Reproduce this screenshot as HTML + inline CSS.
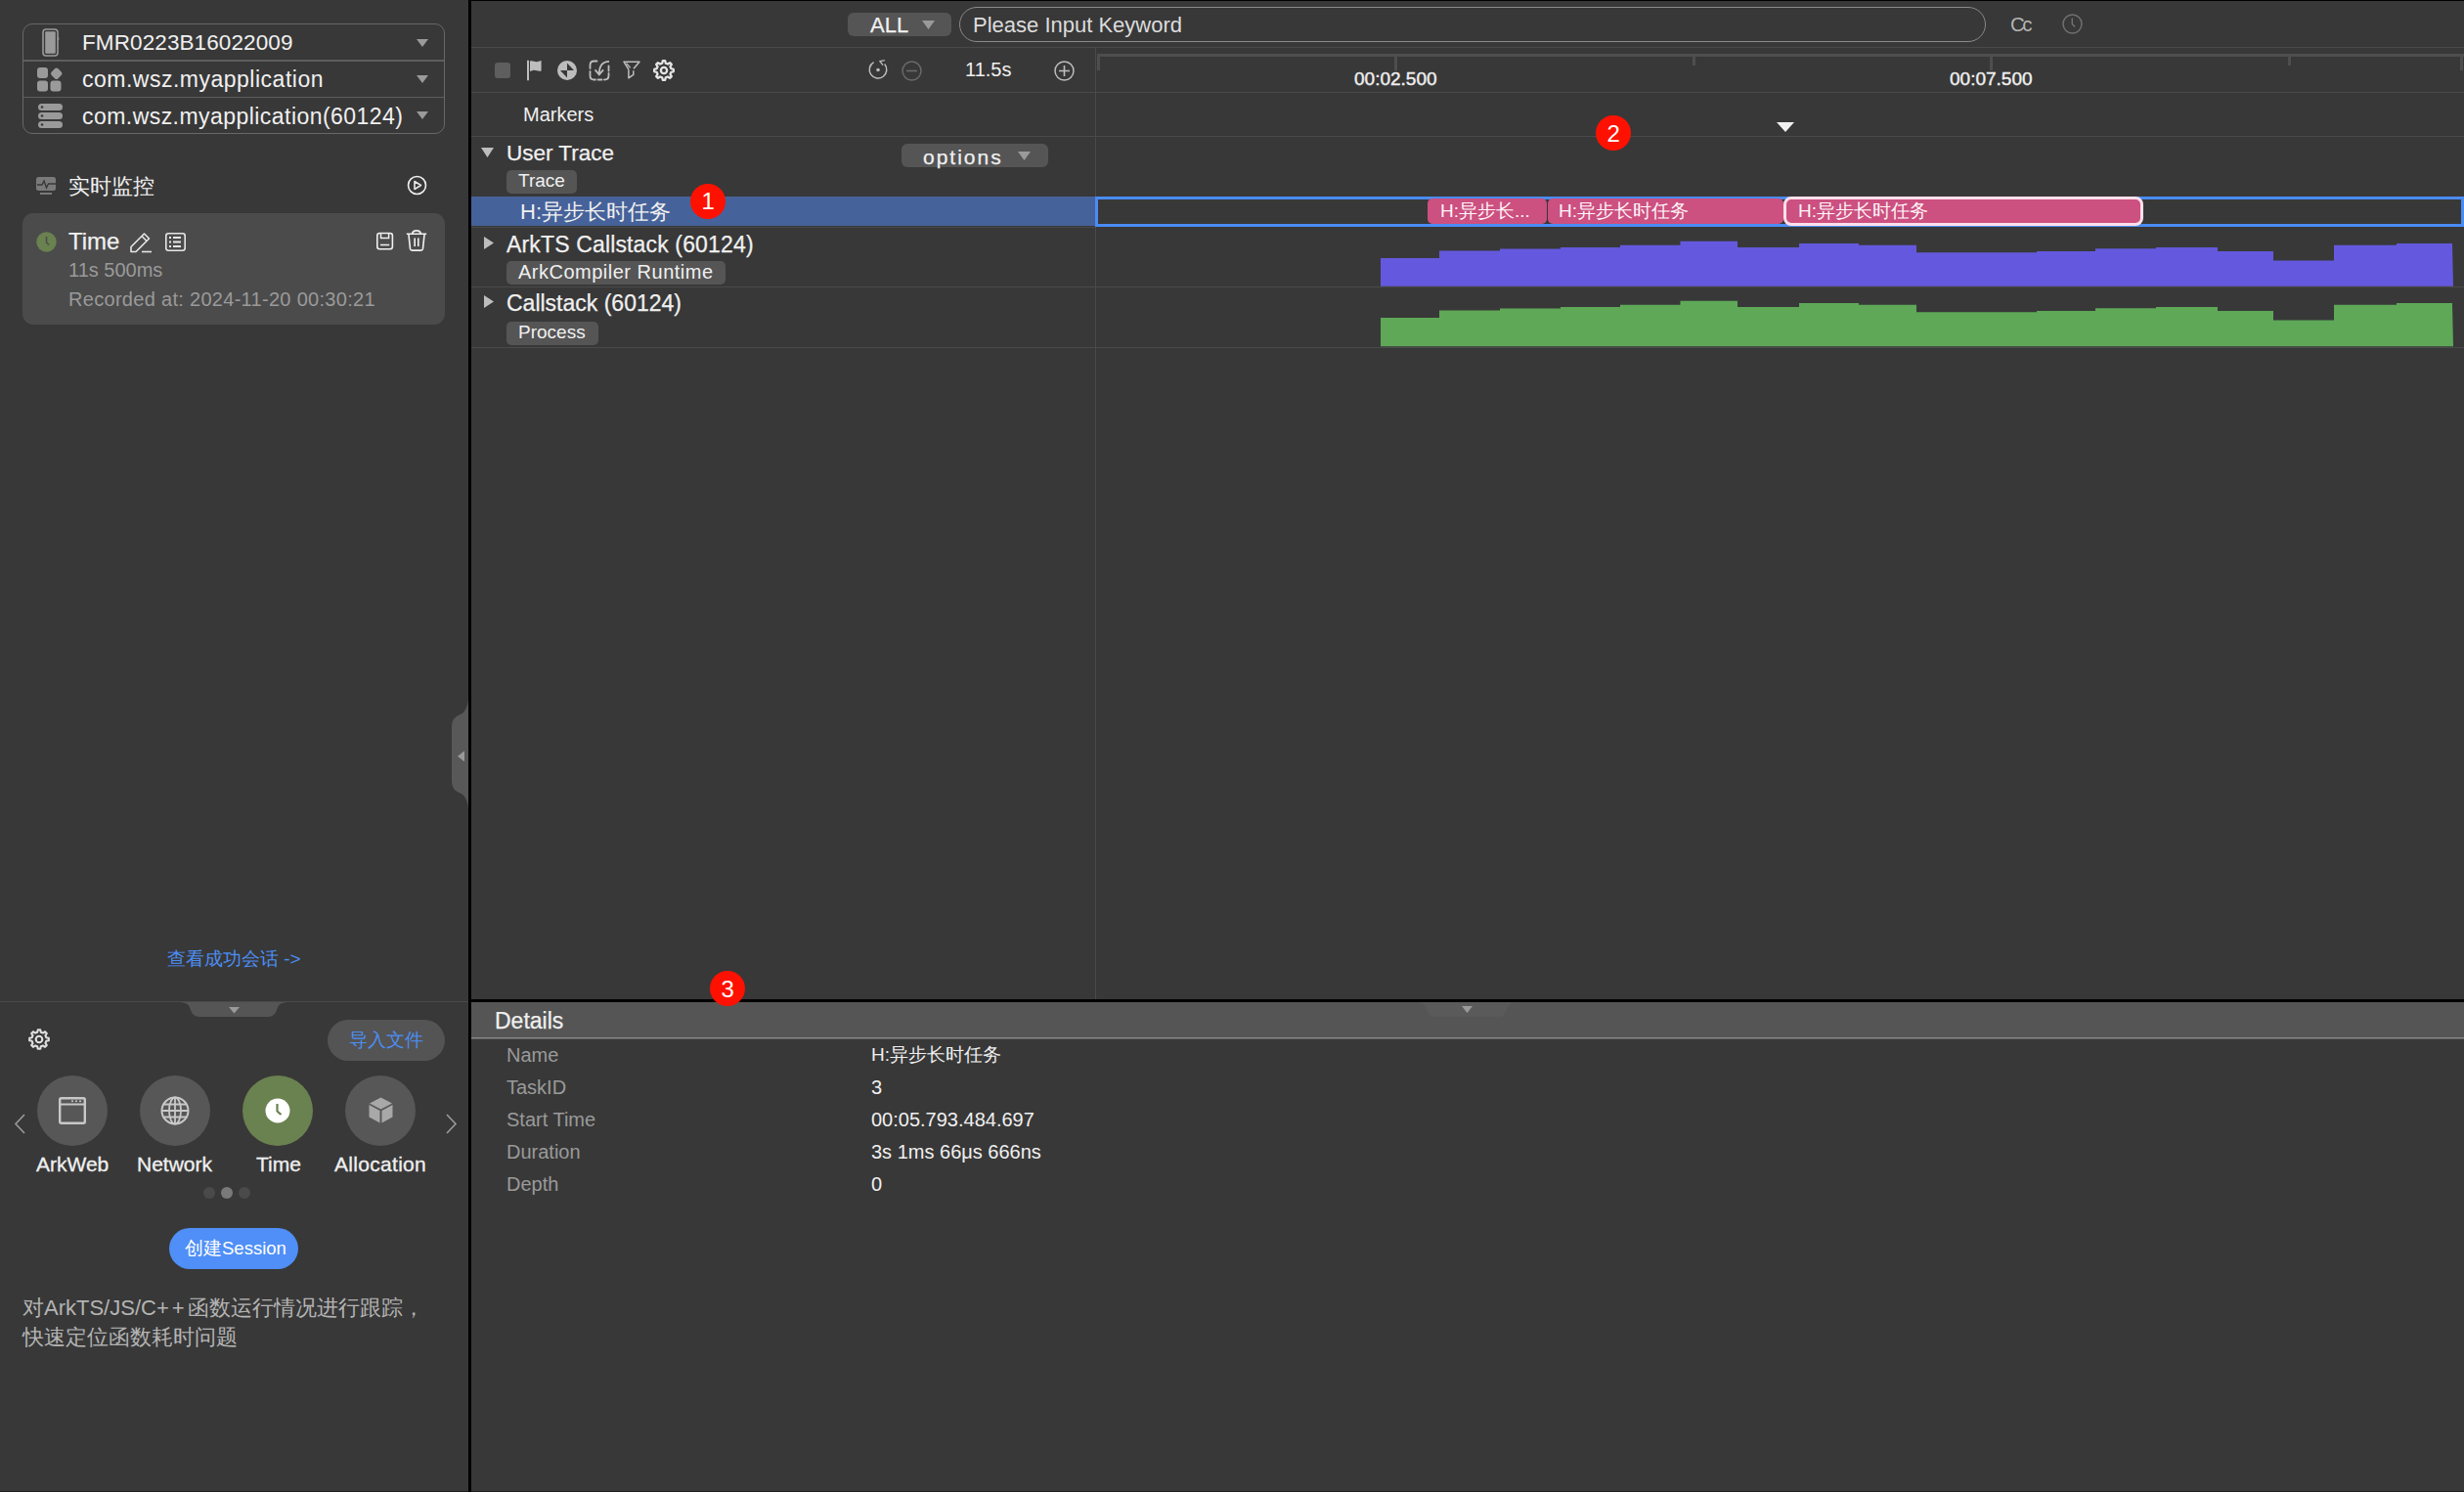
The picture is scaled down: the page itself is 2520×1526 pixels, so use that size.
<!DOCTYPE html>
<html><head><meta charset="utf-8">
<style>
*{margin:0;padding:0;box-sizing:border-box}
html,body{width:2520px;height:1526px;overflow:hidden;background:#383838;font-family:"Liberation Sans",sans-serif;color:#f0f0f0}
.a{position:absolute}
.t{position:absolute;white-space:nowrap;line-height:1}
.hl{position:absolute;height:1px;background:#4a4a4a}
.tag{position:absolute;background:#555;border-radius:5px;height:24px}
svg{position:absolute;overflow:visible}
</style></head><body>
<div class="a" style="left:479px;top:0;width:2041px;height:1px;background:#000"></div>
<div class="a" style="left:0;top:1525px;width:2520px;height:1px;background:#1e1e1e"></div>

<!-- ============ LEFT PANEL ============ -->
<div class="a" style="left:23px;top:24px;width:432px;height:113px;border:1px solid #686868;border-radius:10px"></div>
<div class="a" style="left:24px;top:61px;width:430px;height:2px;background:#5e5e5e"></div>
<div class="a" style="left:24px;top:99px;width:430px;height:1px;background:#5e5e5e"></div>
<!-- phone icon -->
<svg style="left:43px;top:29px" width="17" height="29" viewBox="0 0 17 29"><rect x="1" y="1" width="15" height="27" rx="3" fill="none" stroke="#9a9a9a" stroke-width="1.6"/><rect x="3.2" y="3.2" width="10.6" height="22.6" rx="0.8" fill="#9a9a9a"/><rect x="16" y="9" width="1.2" height="3" fill="#9a9a9a"/></svg>
<!-- apps icon -->
<svg style="left:38px;top:68px" width="27" height="26" viewBox="0 0 27 26"><rect x="0" y="1" width="11" height="11" rx="3" fill="#9a9a9a"/><rect x="0" y="14.5" width="11" height="11" rx="3" fill="#9a9a9a"/><rect x="13.5" y="14.5" width="11" height="11" rx="3" fill="#9a9a9a"/><rect x="15" y="2.5" width="9.5" height="9.5" rx="2.5" transform="rotate(45 19.75 7.25)" fill="#9a9a9a"/></svg>
<!-- server icon -->
<svg style="left:39px;top:106px" width="25" height="25" viewBox="0 0 25 25"><rect x="0" y="0" width="25" height="7" rx="3.5" fill="#9a9a9a"/><rect x="0" y="9" width="25" height="7" rx="3.5" fill="#9a9a9a"/><rect x="0" y="18" width="25" height="7" rx="3.5" fill="#9a9a9a"/><circle cx="4" cy="3.5" r="1.3" fill="#383838"/><circle cx="4" cy="12.5" r="1.3" fill="#383838"/><circle cx="4" cy="21.5" r="1.3" fill="#383838"/></svg>
<div class="t" style="left:84px;top:33px;font-size:22.5px;letter-spacing:0.1px">FMR0223B16022009</div>
<div class="t" style="left:84px;top:70px;font-size:23px;letter-spacing:0.5px">com.wsz.myapplication</div>
<div class="t" style="left:84px;top:108px;font-size:23px;letter-spacing:0.45px">com.wsz.myapplication(60124)</div>
<svg style="left:426px;top:40px" width="12" height="8"><path d="M0 0H12L6 8Z" fill="#9a9a9a"/></svg>
<svg style="left:426px;top:77px" width="12" height="8"><path d="M0 0H12L6 8Z" fill="#9a9a9a"/></svg>
<svg style="left:426px;top:114px" width="12" height="8"><path d="M0 0H12L6 8Z" fill="#9a9a9a"/></svg>

<!-- monitor icon -->
<svg style="left:37px;top:181px" width="21" height="18" viewBox="0 0 21 18"><rect x="0" y="0" width="20" height="14" rx="2.5" fill="#7a7a7a"/><rect x="4" y="16" width="12" height="2" fill="#7a7a7a"/><path d="M1 8H6L8 4L10.5 11L12.5 7H20" fill="none" stroke="#383838" stroke-width="1.4"/></svg>
<div class="t" style="left:70px;top:180px;font-size:22px">实时监控</div>
<svg style="left:416px;top:179px" width="21" height="21" viewBox="0 0 21 21"><circle cx="10.5" cy="10.5" r="9.0" fill="none" stroke="#f0f0f0" stroke-width="1.6"/><path d="M8 6.5V14.5L14.5 10.5Z" fill="none" stroke="#e6e6e6" stroke-width="1.6" stroke-linejoin="round"/></svg>

<div class="a" style="left:23px;top:218px;width:432px;height:114px;background:#4b4b4b;border-radius:11px"></div>
<svg style="left:37px;top:237px" width="21" height="21" viewBox="0 0 21 21"><circle cx="10.5" cy="10.5" r="10.2" fill="#6a8150"/><path d="M10.5 5V11L13 13.5" fill="none" stroke="#4b4b4b" stroke-width="1.5"/></svg>
<div class="t" style="left:70px;top:235px;font-size:24px;-webkit-text-stroke:0.25px #f0f0f0">Time</div>
<!-- pencil -->
<svg style="left:133px;top:236px" width="23" height="23" viewBox="0 0 23 23"><path d="M1 21.5V16.5L14.5 3L19.5 8L6 21.5Z M12 5.5L17 10.5" fill="none" stroke="#e6e6e6" stroke-width="1.6" stroke-linejoin="round"/><path d="M12 21.5H22" stroke="#e6e6e6" stroke-width="1.6"/></svg>
<!-- list -->
<svg style="left:169px;top:238px" width="21" height="19" viewBox="0 0 21 19"><rect x="0.8" y="0.8" width="19.4" height="17.4" rx="2.5" fill="none" stroke="#e6e6e6" stroke-width="1.6"/><path d="M4 5H6M8 5H16M4 9.5H6M8 9.5H16M4 14H6M8 14H16" stroke="#e6e6e6" stroke-width="1.8"/></svg>
<!-- save -->
<svg style="left:384px;top:237px" width="19" height="19" viewBox="0 0 19 19"><rect x="1.8" y="1.5" width="15.6" height="16.2" rx="2.5" fill="none" stroke="#f0f0f0" stroke-width="1.6"/><path d="M5.5 1.5V6.6H13.6V1.5M5 13.4H14.2" fill="none" stroke="#f0f0f0" stroke-width="1.5"/></svg>
<!-- trash -->
<svg style="left:415px;top:235px" width="22" height="22" viewBox="0 0 22 22"><path d="M0.8 4.3H21.2M6.6 4.3Q7 0.9 11 0.9Q15 0.9 15.4 4.3M2.9 4.3L4.5 19.4Q4.8 21.1 6.6 21.1H15.4Q17.2 21.1 17.5 19.4L19.1 4.3" fill="none" stroke="#f0f0f0" stroke-width="1.6"/><path d="M9.2 8.5V17M12.8 8.5V17" stroke="#f0f0f0" stroke-width="1.6"/></svg>
<div class="t" style="left:70px;top:266px;font-size:20px;color:#9a9a9a">11s 500ms</div>
<div class="t" style="left:70px;top:296px;font-size:20px;color:#9a9a9a;letter-spacing:0.3px">Recorded at: 2024-11-20 00:30:21</div>

<div class="t" style="left:171px;top:971px;font-size:19px;color:#4c8ef2">查看成功会话 -&gt;</div>
<div class="a" style="left:0;top:1024px;width:479px;height:1px;background:#4a4a4a"></div>
<svg style="left:181px;top:1025px" width="116" height="15"><path d="M0 0C10 0 12 2 14 8Q16 15 23 15H93Q100 15 102 8C104 2 106 0 116 0Z" fill="#555"/></svg>
<svg style="left:234px;top:1030px" width="11" height="6.5"><path d="M0 0H11L5.5 6.5Z" fill="#9a9a9a"/></svg>
<!-- gear -->
<svg style="left:29px;top:1052px" width="22" height="22" viewBox="0 0 24 24"><path d="M10.02 4.04L10.65 1.29L13.35 1.29L13.98 4.04L16.23 4.97L18.62 3.47L20.53 5.38L19.03 7.77L19.96 10.02L22.71 10.65L22.71 13.35L19.960 13.98L19.03 16.23L20.53 18.62L18.62 20.53L16.23 19.03L13.98 19.96L13.35 22.71L10.65 22.71L10.02 19.96L7.77 19.03L5.38 20.53L3.47 18.62L4.97 16.23L4.04 13.98L1.29 13.35L1.29 10.65L4.04 10.02L4.97 7.77L3.47 5.38L5.38 3.47L7.77 4.97Z" fill="none" stroke="#e0e0e0" stroke-width="2.3" stroke-linejoin="round"/><circle cx="12" cy="12" r="3.6" fill="none" stroke="#e0e0e0" stroke-width="2.3"/></svg>
<div class="a" style="left:335px;top:1043px;width:120px;height:42px;border-radius:21px;background:#545454"></div>
<div class="t" style="left:357px;top:1054px;font-size:19px;color:#4c8ef2">导入文件</div>

<svg style="left:14px;top:1139px" width="13" height="21"><path d="M11 1L2 10.5L11 20" fill="none" stroke="#9a9a9a" stroke-width="1.6"/></svg>
<svg style="left:455px;top:1139px" width="13" height="21"><path d="M2 1L11 10.5L2 20" fill="none" stroke="#9a9a9a" stroke-width="1.6"/></svg>
<div class="a" style="left:38px;top:1100px;width:72px;height:72px;border-radius:50%;background:#575757"></div>
<div class="a" style="left:143px;top:1100px;width:72px;height:72px;border-radius:50%;background:#575757"></div>
<div class="a" style="left:248px;top:1100px;width:72px;height:72px;border-radius:50%;background:#6a8150"></div>
<div class="a" style="left:353px;top:1100px;width:72px;height:72px;border-radius:50%;background:#575757"></div>
<!-- arkweb -->
<svg style="left:60px;top:1122px" width="28" height="28" viewBox="0 0 28 28"><rect x="1.2" y="1.2" width="25.6" height="25.6" rx="1.5" fill="none" stroke="#c8c8c8" stroke-width="2.4"/><path d="M1 7.5H27" stroke="#c8c8c8" stroke-width="2"/><circle cx="14" cy="4.3" r="1" fill="#c8c8c8"/><circle cx="18" cy="4.3" r="1" fill="#c8c8c8"/><circle cx="22" cy="4.3" r="1" fill="#c8c8c8"/></svg>
<!-- globe -->
<svg style="left:164px;top:1121px" width="30" height="30" viewBox="0 0 30 30"><circle cx="15" cy="15" r="13.5" fill="none" stroke="#c8c8c8" stroke-width="2"/><ellipse cx="15" cy="15" rx="6" ry="13.5" fill="none" stroke="#c8c8c8" stroke-width="1.8"/><path d="M15 1.5V28.5M1.5 15H28.5M3.5 8.5H26.5M3.5 21.5H26.5" stroke="#c8c8c8" stroke-width="1.8"/></svg>
<!-- clock -->
<svg style="left:271px;top:1123px" width="26" height="26" viewBox="0 0 26 26"><circle cx="13" cy="13" r="12.5" fill="#fff"/><path d="M12.5 6V13.5L16.5 17" fill="none" stroke="#6a8150" stroke-width="2.2"/></svg>
<!-- cube -->
<svg style="left:377px;top:1122px" width="25" height="27" viewBox="0 0 25 27"><path d="M12.5 0.5L24 6.5L12.5 12.5L1 6.5Z" fill="#a8a8a8"/><path d="M0.5 8L11.5 14V26.5L0.5 20.5Z" fill="#a8a8a8"/><path d="M24.5 8L13.5 14V26.5L24.5 20.5Z" fill="#a8a8a8"/></svg>
<div class="t" style="left:37px;top:1180px;font-size:21px;-webkit-text-stroke:0.3px #f0f0f0">ArkWeb</div>
<div class="t" style="left:140px;top:1180px;font-size:21px;-webkit-text-stroke:0.3px #f0f0f0">Network</div>
<div class="t" style="left:262px;top:1180px;font-size:21px;-webkit-text-stroke:0.3px #f0f0f0">Time</div>
<div class="t" style="left:342px;top:1180px;font-size:21px;letter-spacing:0.3px;-webkit-text-stroke:0.3px #f0f0f0">Allocation</div>
<div class="a" style="left:208px;top:1214px;width:12px;height:12px;border-radius:50%;background:#4a4a4a"></div>
<div class="a" style="left:226px;top:1214px;width:12px;height:12px;border-radius:50%;background:#7a7a7a"></div>
<div class="a" style="left:244px;top:1214px;width:12px;height:12px;border-radius:50%;background:#4a4a4a"></div>

<div class="a" style="left:173px;top:1256px;width:132px;height:42px;border-radius:21px;background:#4f8ff7"></div>
<div class="t" style="left:189px;top:1268px;font-size:18.5px;color:#fff">创建Session</div>
<div class="t" style="left:23px;top:1323px;font-size:22px;line-height:29.5px;color:#b4b4b4">对ArkTS/JS/C<span style="letter-spacing:3px">++</span>函数运行情况进行跟踪，<br>快速定位函数耗时问题</div>

<!-- divider + handle -->
<div class="a" style="left:479px;top:0;width:3px;height:1526px;background:#000"></div>
<svg style="left:462px;top:713px" width="17" height="116"><path d="M17 0C17 8 14 16 8 18Q0 21 0 30V86Q0 95 8 98C14 100 17 108 17 116Z" fill="#585858"/></svg>
<svg style="left:468px;top:768px" width="8" height="11"><path d="M7 0V11L0 5.5Z" fill="#9a9a9a"/></svg>

<!-- ============ MAIN TOP ============ -->
<div class="hl" style="left:482px;top:48px;width:2038px"></div>
<div class="a" style="left:867px;top:13px;width:106px;height:24px;border-radius:6px;background:#555"></div>
<div class="t" style="left:890px;top:15px;font-size:22px;-webkit-text-stroke:0.25px #f0f0f0">ALL</div>
<svg style="left:943px;top:21px" width="13" height="9"><path d="M0 0H13L6.5 9Z" fill="#9a9a9a"/></svg>
<div class="a" style="left:981px;top:7px;width:1050px;height:36px;border:1px solid #8a8a8a;border-radius:18px"></div>
<div class="t" style="left:995px;top:15px;font-size:22px;color:#dcdcdc">Please Input Keyword</div>
<div class="t" style="left:2056px;top:14.5px;font-size:20.5px;letter-spacing:-2.5px;color:#b4b4b4">Cc</div>
<svg style="left:2109px;top:14px" width="21" height="21" viewBox="0 0 21 21"><circle cx="10.5" cy="10.5" r="9.5" fill="none" stroke="#707070" stroke-width="1.5"/><path d="M10.3 4.6V10.6L13.2 13.6" fill="none" stroke="#707070" stroke-width="1.4"/></svg>

<!-- toolbar icons -->
<div class="a" style="left:506px;top:64px;width:16px;height:16px;border-radius:3px;background:#5e5e5e"></div>
<svg style="left:538px;top:61px" width="17" height="22" viewBox="0 0 17 22"><path d="M2 0.8V21.2" stroke="#bdbdbd" stroke-width="2"/><path d="M4 1.6C7 0.4 9 3 12 2L15.6 1V11.6C12.5 12.6 10 10.2 7 11L4 12Z" fill="#bdbdbd"/></svg>
<svg style="left:570px;top:62px" width="20" height="20" viewBox="0 0 20 20"><circle cx="10" cy="10" r="10" fill="#bdbdbd"/><path d="M10 2.5L17 10H10Z M3 10H10V17.5Z" fill="#383838"/></svg>
<svg style="left:602px;top:61px" width="22" height="22" viewBox="0 0 22 22"><path d="M1.5 9V5.5Q1.5 1.5 5.5 1.5H8.5M1.5 12V16.5Q1.5 20.5 5.5 20.5H7M9.5 20.5H13.5M16 20.5Q20.5 20.5 20.5 16.5V14M20.5 11.5V6.5" fill="none" stroke="#bdbdbd" stroke-width="1.8" stroke-linecap="round"/><path d="M21 1.8C14.5 1.8 10.8 6 10.8 15" fill="none" stroke="#bdbdbd" stroke-width="1.8"/><path d="M6.6 10.4L10.8 15.4L15.1 10.4" fill="none" stroke="#bdbdbd" stroke-width="1.8"/></svg>
<svg style="left:637px;top:62px" width="18" height="19" viewBox="0 0 18 19"><path d="M5.9 9.2L1 1.2H17L11 8.3M10.8 10.3V14.4L5.9 17.8V9.2" fill="none" stroke="#bdbdbd" stroke-width="1.5" stroke-linejoin="round"/><path d="M3.6 2.6L7.6 7.4" stroke="#bdbdbd" stroke-width="1.4"/></svg>
<svg style="left:668px;top:61px" width="22" height="22" viewBox="0 0 24 24"><path d="M10.02 4.04L10.65 1.29L13.35 1.29L13.98 4.04L16.23 4.97L18.62 3.47L20.53 5.38L19.03 7.77L19.96 10.02L22.71 10.65L22.71 13.35L19.960 13.98L19.03 16.23L20.53 18.62L18.62 20.53L16.23 19.03L13.98 19.96L13.35 22.71L10.65 22.71L10.02 19.96L7.77 19.03L5.38 20.53L3.47 18.62L4.97 16.23L4.04 13.98L1.29 13.35L1.29 10.65L4.04 10.02L4.97 7.77L3.47 5.38L5.38 3.47L7.77 4.97Z" fill="none" stroke="#e6e6e6" stroke-width="2.5" stroke-linejoin="round"/><circle cx="12" cy="12" r="3.4" fill="none" stroke="#e6e6e6" stroke-width="2.5"/></svg>
<svg style="left:888px;top:61px" width="21" height="21" viewBox="0 0 21 21"><path d="M5.6 2.6A8.8 8.8 0 1 0 16.7 4.5" fill="none" stroke="#bdbdbd" stroke-width="1.5"/><path d="M16.8 0.6L12 1.6L15 5.6" fill="none" stroke="#bdbdbd" stroke-width="1.4"/><circle cx="10" cy="10.5" r="1.8" fill="#bdbdbd"/></svg>
<svg style="left:922px;top:62px" width="21" height="21" viewBox="0 0 21 21"><circle cx="10.5" cy="10.5" r="9.5" fill="none" stroke="#6a6a6a" stroke-width="1.5"/><path d="M5 10.5H16" stroke="#6a6a6a" stroke-width="1.6"/></svg>
<div class="t" style="left:987px;top:61px;font-size:20px">11.5s</div>
<svg style="left:1078px;top:62px" width="21" height="21" viewBox="0 0 21 21"><circle cx="10.5" cy="10.5" r="9.5" fill="none" stroke="#bdbdbd" stroke-width="1.5"/><path d="M5 10.5H16M10.5 5V16" stroke="#bdbdbd" stroke-width="1.6"/></svg>
<div class="hl" style="left:482px;top:94px;width:2038px"></div>
<div class="a" style="left:1120px;top:48px;width:1px;height:974px;background:#4a4a4a"></div>

<!-- ruler -->
<div class="a" style="left:1122px;top:55px;width:1398px;height:3px;background:#4e4e4e"></div>
<div class="a" style="left:1122px;top:55px;width:3px;height:17px;background:#4e4e4e"></div>
<div class="a" style="left:1426px;top:57px;width:3px;height:15px;background:#4e4e4e"></div>
<div class="a" style="left:1731px;top:57px;width:3px;height:10px;background:#4e4e4e"></div>
<div class="a" style="left:2035px;top:57px;width:3px;height:15px;background:#4e4e4e"></div>
<div class="a" style="left:2340px;top:57px;width:3px;height:10px;background:#4e4e4e"></div>
<div class="a" style="left:2516px;top:55px;width:3px;height:17px;background:#4e4e4e"></div>
<div class="t" style="left:1385px;top:71px;font-size:19px;color:#f0f0f0;-webkit-text-stroke:0.4px #f0f0f0">00:02.500</div>
<div class="t" style="left:1994px;top:71px;font-size:19px;color:#f0f0f0;-webkit-text-stroke:0.4px #f0f0f0">00:07.500</div>

<div class="t" style="left:535px;top:107px;font-size:20px">Markers</div>
<svg style="left:1817px;top:125px" width="18" height="10"><path d="M0 0H18L9 10Z" fill="#f0f0f0"/></svg>
<div class="hl" style="left:482px;top:139px;width:2038px"></div>

<svg style="left:492px;top:151px" width="13" height="10"><path d="M0 0H13L6.5 10Z" fill="#bdbdbd"/></svg>
<div class="t" style="left:518px;top:146px;font-size:22.5px;-webkit-text-stroke:0.25px #f0f0f0">User Trace</div>
<div class="tag" style="left:518px;top:174px;width:72px"></div>
<div class="t" style="left:530px;top:175px;font-size:19px">Trace</div>
<div class="a" style="left:922px;top:147px;width:150px;height:24px;border-radius:6px;background:#555"></div>
<div class="t" style="left:944px;top:150px;font-size:21px;letter-spacing:2px;-webkit-text-stroke:0.25px #f0f0f0">options</div>
<svg style="left:1041px;top:155px" width="13" height="9"><path d="M0 0H13L6.5 9Z" fill="#9a9a9a"/></svg>

<div class="a" style="left:482px;top:201px;width:638px;height:30px;background:#46629a"></div>
<div class="t" style="left:532px;top:206px;font-size:22px">H:异步长时任务</div>
<div class="hl" style="left:482px;top:232px;width:638px"></div>

<!-- selection box & blocks -->
<div class="a" style="left:1120px;top:201px;width:1400px;height:31px;border:3px solid #4a8cf5"></div>
<div class="a" style="left:1460px;top:203px;width:122px;height:26px;border-radius:5px;background:#cc5080"></div>
<div class="a" style="left:1583px;top:203px;width:241px;height:26px;border-radius:5px;background:#cc5080"></div>
<div class="a" style="left:1824px;top:201px;width:368px;height:30px;border-radius:8px;background:#cc5080;border:3px solid #ffdfea"></div>
<div class="t" style="left:1473px;top:205.5px;font-size:19px;color:#fff4f8">H:异步长...</div>
<div class="t" style="left:1594px;top:205.5px;font-size:19px;color:#fff4f8">H:异步长时任务</div>
<div class="t" style="left:1839px;top:205.5px;font-size:19px;color:#fff4f8">H:异步长时任务</div>

<svg style="left:495px;top:242px" width="10" height="13"><path d="M0 0V13L10 6.5Z" fill="#bdbdbd"/></svg>
<div class="t" style="left:518px;top:239px;font-size:23px;letter-spacing:0.15px;-webkit-text-stroke:0.25px #f0f0f0">ArkTS Callstack (60124)</div>
<div class="tag" style="left:518px;top:267px;width:224px"></div>
<div class="t" style="left:530px;top:268px;font-size:20px;letter-spacing:0.5px">ArkCompiler Runtime</div>
<div class="hl" style="left:482px;top:293px;width:2038px"></div>
<svg style="left:495px;top:302px" width="10" height="13"><path d="M0 0V13L10 6.5Z" fill="#bdbdbd"/></svg>
<div class="t" style="left:518px;top:299px;font-size:23px;-webkit-text-stroke:0.25px #f0f0f0">Callstack (60124)</div>
<div class="tag" style="left:518px;top:329px;width:94px"></div>
<div class="t" style="left:530px;top:330px;font-size:19px">Process</div>
<div class="hl" style="left:482px;top:355px;width:2038px"></div>

<!-- charts -->
<svg style="left:0;top:0" width="2520" height="400">
<polygon fill="#6459de" points="1412,292.8 1412,264 1472,264 1472,256.5 1534,256.5 1534,254.4 1596,254.4 1596,253 1657,253 1657,250.8 1718.5,250.8 1718.5,246.7 1777,246.7 1777,253 1840,253 1840,249 1901,249 1901,250.7 1960,250.7 1960,258.3 2083,258.3 2083,257 2143,257 2143,254.2 2205,254.2 2205,253 2268,253 2268,257 2325,257 2325,266.5 2387,266.5 2387,250.7 2451,250.7 2451,249 2508,249 2509,292.8"/>
<polygon fill="#5ea857" points="1412,354.2 1412,325 1472,325 1472,317.5 1534,317.5 1534,315.4 1596,315.4 1596,314 1657,314 1657,311.8 1718.5,311.8 1718.5,307.7 1777,307.7 1777,314 1840,314 1840,310 1901,310 1901,311.7 1960,311.7 1960,319.3 2083,319.3 2083,318 2143,318 2143,315.2 2205,315.2 2205,314 2268,314 2268,318 2325,318 2325,327.5 2387,327.5 2387,311.7 2451,311.7 2451,310 2508,310 2509,354.2"/>
</svg>

<!-- ============ DETAILS ============ -->
<div class="a" style="left:482px;top:1022px;width:2038px;height:3px;background:#000"></div>
<div class="a" style="left:482px;top:1025px;width:2038px;height:36px;background:#555"></div>
<svg style="left:1446px;top:1025px" width="108" height="15"><path d="M0 0C9 0 11 2 13 8Q15 15 22 15H86Q93 15 95 8C97 2 99 0 108 0Z" fill="#5a5a5a"/></svg>
<svg style="left:1495px;top:1029px" width="11" height="7"><path d="M0 0H11L5.5 7Z" fill="#9a9a9a"/></svg>
<div class="a" style="left:482px;top:1061px;width:2038px;height:1px;background:#8a8a8a"></div><div class="a" style="left:482px;top:1062px;width:2038px;height:1px;background:#606060"></div>
<div class="t" style="left:506px;top:1033px;font-size:23px;-webkit-text-stroke:0.25px #f0f0f0">Details</div>
<div class="t" style="left:518px;top:1069px;font-size:20px;color:#9a9a9a">Name</div>
<div class="t" style="left:518px;top:1102px;font-size:20px;color:#9a9a9a">TaskID</div>
<div class="t" style="left:518px;top:1135px;font-size:20px;color:#9a9a9a">Start Time</div>
<div class="t" style="left:518px;top:1168px;font-size:20px;color:#9a9a9a">Duration</div>
<div class="t" style="left:518px;top:1201px;font-size:20px;color:#9a9a9a">Depth</div>
<div class="t" style="left:891px;top:1069px;font-size:19px">H:异步长时任务</div>
<div class="t" style="left:891px;top:1102px;font-size:20px">3</div>
<div class="t" style="left:891px;top:1135px;font-size:20px">00:05.793.484.697</div>
<div class="t" style="left:891px;top:1168px;font-size:20px">3s 1ms 66μs 666ns</div>
<div class="t" style="left:891px;top:1201px;font-size:20px">0</div>
<!-- badges -->
<div class="a" style="left:706px;top:188px;width:36px;height:36px;border-radius:50%;background:#fe1100"></div>
<div class="t" style="left:717.5px;top:194px;font-size:24px;color:#fff">1</div>
<div class="a" style="left:1632px;top:118px;width:36px;height:36px;border-radius:50%;background:#fe1100"></div>
<div class="t" style="left:1643.5px;top:124.5px;font-size:24px;color:#fff">2</div>
<div class="a" style="left:725.5px;top:993px;width:36px;height:36px;border-radius:50%;background:#fe1100"></div>
<div class="t" style="left:737.5px;top:999.5px;font-size:24px;color:#fff">3</div>

</body></html>
